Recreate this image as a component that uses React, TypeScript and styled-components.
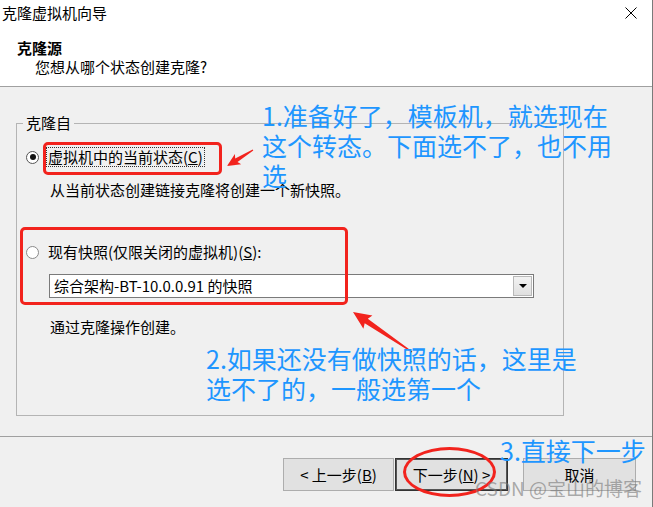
import React from "react";
import styled, { createGlobalStyle } from "styled-components";

const GlobalStyle = createGlobalStyle`
  html, body { margin: 0; padding: 0; background: #f0f0f0; }
  body { font-family: "Noto Sans CJK SC", "Noto Sans", sans-serif; }
  * { box-sizing: border-box; }
`;

const Window = styled.div`
  position: relative;
  width: 653px;
  height: 507px;
  background: #f0f0f0;
  border-right: 1px solid #7a7a7a;
  display: flex;
  flex-direction: column;
  overflow: hidden;
  font-size: 15px;
  color: #000;
`;

const Header = styled.div`
  background: #fff;
  height: 87px;
  border-bottom: 1px solid #a0a0a0;
  display: flex;
  flex-direction: column;
`;

const TitleBar = styled.div`
  height: 26px;
  display: flex;
  align-items: center;
  justify-content: space-between;
  padding: 0 15px 0 2px;
  line-height: 20px;
`;

const CloseIcon = styled.svg`
  width: 12px;
  height: 12px;
  display: block;
`;

const HeaderTitle = styled.div`
  margin: 12px 0 0 17px;
  font-weight: 700;
  line-height: 20px;
`;

const HeaderSub = styled.div`
  margin-left: 35px;
  line-height: 18px;
`;

const Body = styled.div`
  height: 349px;
  padding: 26px 0 0 16px;
`;

const Group = styled.fieldset`
  width: 548px;
  height: 303px;
  margin: 0;
  padding: 13px 0 0 0;
  border: 1px solid #b4b4b4;
  display: flex;
  flex-direction: column;
  align-items: flex-start;
`;

const Legend = styled.legend`
  margin-left: 6px;
  padding: 0 3px;
  line-height: 20px;
`;

const OptionRow = styled.div<{ $top?: number }>`
  display: flex;
  align-items: center;
  height: 22px;
  padding-left: 9px;
  margin-top: ${(p) => p.$top ?? 0}px;
`;

const Radio = styled.span<{ $checked?: boolean }>`
  width: 13px;
  height: 13px;
  border-radius: 50%;
  border: 1px solid ${(p) => (p.$checked ? "#555" : "#8a8a8a")};
  background: #fff;
  margin-right: 7px;
  display: flex;
  align-items: center;
  justify-content: center;
  &::after {
    content: "";
    width: 6px;
    height: 6px;
    border-radius: 50%;
    background: ${(p) => (p.$checked ? "#111" : "transparent")};
  }
`;

const OptionLabel = styled.span<{ $focused?: boolean }>`
  line-height: 18px;
  padding: 0 1px;
  border: 1px dotted ${(p) => (p.$focused ? "#333" : "transparent")};
  white-space: nowrap;
`;

const Note = styled.div<{ $top: number }>`
  margin: ${(p) => p.$top}px 0 0 33px;
  line-height: 22px;
  white-space: nowrap;
`;

const Combo = styled.div`
  margin: 11px 0 0 32px;
  width: 485px;
  height: 24px;
  background: #fff;
  border: 1px solid #7a7a7a;
  display: flex;
  align-items: center;
  justify-content: space-between;
  padding: 0 1px 0 4px;
`;

const ComboText = styled.span`
  line-height: 20px;
  white-space: nowrap;
`;

const DropButton = styled.span`
  width: 19px;
  height: 20px;
  background: linear-gradient(#f2f2f2, #e0e0e0);
  border: 1px solid #b8b8b8;
  display: flex;
  align-items: center;
  justify-content: center;
  &::after {
    content: "";
    border-left: 4px solid transparent;
    border-right: 4px solid transparent;
    border-top: 4px solid #000;
  }
`;

const Footer = styled.div`
  flex: 1;
  border-top: 1px solid #a0a0a0;
  display: flex;
  justify-content: flex-end;
  align-items: flex-start;
  padding: 21px 16px 0 0;
`;

const ButtonGroup = styled.div`
  display: flex;
  gap: 1px;
  margin-right: 15px;
`;

const Button = styled.div<{ $w: number; $default?: boolean }>`
  width: ${(p) => p.$w}px;
  height: 33px;
  background: #e1e1e1;
  border: 1px solid ${(p) => (p.$default ? "#333" : "#adadad")};
  box-shadow: ${(p) => (p.$default ? "inset 0 0 0 1px #555" : "none")};
  display: flex;
  align-items: center;
  justify-content: center;
  line-height: 20px;
  white-space: nowrap;
`;

const Overlay = styled.div`
  position: absolute;
  inset: 0;
  pointer-events: none;
`;

const Annotation = styled.div<{ $x: number; $y: number }>`
  position: absolute;
  left: ${(p) => p.$x}px;
  top: ${(p) => p.$y}px;
  color: #1e96ff;
  font-size: 25px;
  line-height: 30px;
  white-space: nowrap;
`;

const RedBox = styled.div<{ $x: number; $y: number; $w: number; $h: number }>`
  position: absolute;
  left: ${(p) => p.$x}px;
  top: ${(p) => p.$y}px;
  width: ${(p) => p.$w}px;
  height: ${(p) => p.$h}px;
  border: 3px solid #f2231d;
  border-radius: 5px;
`;

const RedEllipse = styled.div`
  position: absolute;
  left: 403px;
  top: 447px;
  width: 93px;
  height: 50px;
  border: 3.5px solid #f2231d;
  border-radius: 50%;
`;

const Watermark = styled.div`
  position: absolute;
  left: 475px;
  top: 476px;
  font-size: 19px;
  line-height: 24px;
  color: rgba(120, 120, 120, 0.6);
  white-space: nowrap;
`;

const ArrowLayer = styled.svg`
  position: absolute;
  left: 0;
  top: 0;
  width: 653px;
  height: 507px;
`;

function arrowPoints(tx: number, ty: number, px: number, py: number, head: number, headW: number, shaftW: number) {
  const dx = px - tx;
  const dy = py - ty;
  const len = Math.hypot(dx, dy);
  const ux = dx / len;
  const uy = dy / len;
  const nx = -uy;
  const ny = ux;
  const bx = px - ux * head;
  const by = py - uy * head;
  const pts = [
    [tx + nx * 0.6, ty + ny * 0.6],
    [bx + nx * shaftW, by + ny * shaftW],
    [bx + nx * headW - ux * 2, by + ny * headW - uy * 2],
    [px, py],
    [bx - nx * headW - ux * 2, by - ny * headW - uy * 2],
    [bx - nx * shaftW, by - ny * shaftW],
    [tx - nx * 0.6, ty - ny * 0.6],
  ];
  return pts.map((p) => `${p[0].toFixed(1)},${p[1].toFixed(1)}`).join(" ");
}

export default function App() {
  return (
    <>
      <GlobalStyle />
      <Window>
        <Header>
          <TitleBar>
            <span>克隆虚拟机向导</span>
            <CloseIcon viewBox="0 0 12 12">
              <path d="M0.5 0.5 L11.5 11.5 M11.5 0.5 L0.5 11.5" stroke="#000" strokeWidth="1" fill="none" />
            </CloseIcon>
          </TitleBar>
          <HeaderTitle>克隆源</HeaderTitle>
          <HeaderSub>您想从哪个状态创建克隆?</HeaderSub>
        </Header>
        <Body>
          <Group>
            <Legend>克隆自</Legend>
            <OptionRow>
              <Radio $checked />
              <OptionLabel $focused>
                虚拟机中的当前状态(<u>C</u>)
              </OptionLabel>
            </OptionRow>
            <Note $top={11}>从当前状态创建链接克隆将创建一个新快照。</Note>
            <OptionRow $top={40}>
              <Radio />
              <OptionLabel>
                现有快照(仅限关闭的虚拟机)(<u>S</u>):
              </OptionLabel>
            </OptionRow>
            <Combo>
              <ComboText>综合架构-BT-10.0.0.91 的快照</ComboText>
              <DropButton />
            </Combo>
            <Note $top={18}>通过克隆操作创建。</Note>
          </Group>
        </Body>
        <Footer>
          <ButtonGroup>
            <Button $w={111}>
              &lt; 上一步(<u>B</u>)
            </Button>
            <Button $w={113} $default>
              下一步(<u>N</u>) &gt;
            </Button>
          </ButtonGroup>
          <Button $w={113}>取消</Button>
        </Footer>

        <Overlay>
          <RedBox $x={43} $y={142} $w={179} $h={33} />
          <RedBox $x={20} $y={227} $w={328} $h={78} />
          <RedEllipse />
          <ArrowLayer viewBox="0 0 653 507">
            <polygon points={arrowPoints(253, 150, 227, 166, 11, 6, 2.2)} fill="#f2231d" />
            <polygon points={arrowPoints(412, 352, 353, 312, 16, 8, 2.8)} fill="#f2231d" />
          </ArrowLayer>
          <Annotation $x={262} $y={100}>
            <div>1.准备好了，模板机，就选现在</div>
            <div>这个转态。下面选不了，也不用</div>
            <div>选</div>
          </Annotation>
          <Annotation $x={206} $y={343}>
            <div>2.如果还没有做快照的话，这里是</div>
            <div>选不了的，一般选第一个</div>
          </Annotation>
          <Annotation $x={500} $y={435}>3.直接下一步</Annotation>
          <Watermark>CSDN @宝山的博客</Watermark>
        </Overlay>
      </Window>
    </>
  );
}
